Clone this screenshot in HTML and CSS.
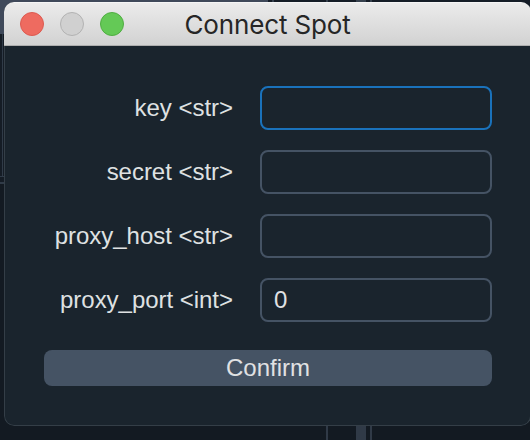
FILE: index.html
```html
<!DOCTYPE html>
<html lang="en">
<head>
<meta charset="utf-8">
<title>Connect Spot</title>
<link rel="stylesheet" href="styles.css">
</head>
<body>
<div class="desktop">
  <div class="backdrop backdrop-top"></div>
  <div class="backdrop backdrop-left"></div>
  <div class="backdrop backdrop-bottom"></div>
  <main class="window">
    <header class="titlebar">
      <div class="controls">
        <span class="control close"></span>
        <span class="control minimize"></span>
        <span class="control maximize"></span>
      </div>
      <h1 class="title">Connect Spot</h1>
    </header>
    <form class="form">
      <label class="label" for="key">key &lt;str&gt;</label>
      <input class="field focused" id="key" type="text">
      <label class="label" for="secret">secret &lt;str&gt;</label>
      <input class="field" id="secret" type="text">
      <label class="label" for="host">proxy_host &lt;str&gt;</label>
      <input class="field" id="host" type="text">
      <label class="label" for="port">proxy_port &lt;int&gt;</label>
      <input class="field" id="port" type="text" value="0">
      <button class="confirm" type="button">Confirm</button>
    </form>
  </main>
</div>
</body>
</html>
```
FILE: styles.css
```css
* { box-sizing: border-box; }
body {
  margin: 0;
  font-family: "Liberation Sans", Arial, sans-serif;
}
.desktop {
  position: relative;
  width: 530px;
  height: 440px;
  padding: 2px 0 0 4px;
  overflow: hidden;
  background: #131a22;
}
.backdrop { position: absolute; }
.backdrop-top {
  top: 0;
  left: 0;
  width: 530px;
  height: 14px;
  background: linear-gradient(90deg, #3f495a 268px, #151d27 268px 272px, #36414e 272px 274px, #151d27 274px 326px, #36414e 326px 328px, #151d27 328px 356px, #36414e 356px 366px, #151d27 366px 370px, #36414e 370px 372px, #151d27 372px);
}
.backdrop-left {
  top: 0;
  left: 0;
  width: 4px;
  height: 186px;
  background:
    linear-gradient(#3f495a 34px, transparent 34px 176px, #303b48 176px 177px, #151c25 177px 182px, #303b48 182px 184px, #131a22 184px),
    linear-gradient(90deg, #151c25 2px, #303b48 2px 3px, #151c25 3px);
}
.backdrop-bottom {
  top: 426px;
  left: 326px;
  width: 46px;
  height: 14px;
  background: linear-gradient(90deg, #303a47 2px, transparent 2px 30px, #303a47 30px 40px, transparent 40px 44px, #303a47 44px);
}
.window {
  position: relative;
  width: 527px;
  height: 424px;
  overflow: hidden;
  border-radius: 10px;
  background: #1a242d;
}
.window::after {
  content: "";
  position: absolute;
  inset: 44px 0 0;
  border: 1px solid #343e47;
  border-top: 0;
  border-radius: 0 0 10px 10px;
  pointer-events: none;
}
.titlebar {
  display: grid;
  grid-template-columns: 1fr auto 1fr;
  align-items: center;
  height: 44px;
  padding: 0 16px;
  border-top: 1px solid #f5f5f5;
  border-bottom: 1px solid #aeaeae;
  background: linear-gradient(#ebebeb, #d2d2d2);
}
.controls { display: flex; gap: 16px; }
.control {
  width: 24px;
  height: 24px;
  border: 1px solid;
  border-radius: 50%;
}
.close { background: #ee6b60; border-color: #dc5a50; }
.minimize { background: #d0d0d0; border-color: #b2b2b2; }
.maximize { background: #64c956; border-color: #50ad42; }
.title {
  margin: 2px 0 0;
  color: #262626;
  font: 400 26px/30px Inter, sans-serif;
  letter-spacing: -0.15px;
  white-space: nowrap;
}
.form {
  display: grid;
  grid-template-columns: 189px 232px;
  grid-auto-rows: 44px;
  gap: 20px 27px;
  padding: 40px;
}
.label {
  color: #dfe1e2;
  font-size: 24px;
  line-height: 44px;
  text-align: right;
  letter-spacing: -0.03px;
  white-space: nowrap;
}
.field {
  width: 232px;
  height: 44px;
  padding: 0 12px;
  border: 2px solid #455364;
  border-radius: 8px;
  outline: 0;
  background: #1a242d;
  color: #e0e1e3;
  font: 24px "Liberation Sans", Arial, sans-serif;
}
.focused { border-color: #1a72bb; }
.confirm {
  grid-column: 1 / -1;
  height: 36px;
  margin-top: 8px;
  padding: 0;
  border: 0;
  border-radius: 8px;
  background: #455364;
  color: #e0e1e3;
  font: 24px/36px "Liberation Sans", Arial, sans-serif;
}
```
